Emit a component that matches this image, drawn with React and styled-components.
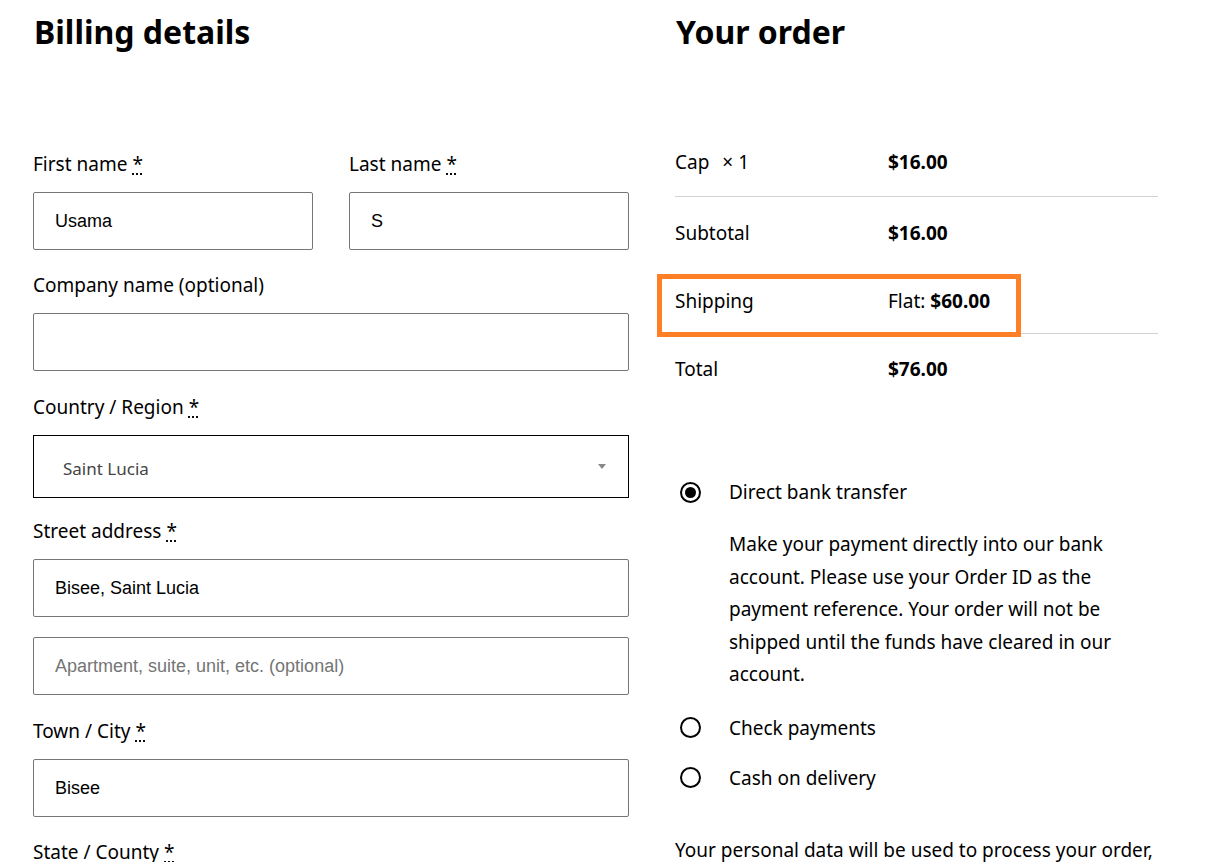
import React from "react";
import styled, { createGlobalStyle } from "styled-components";

const GlobalStyle = createGlobalStyle`
  html, body {
    margin: 0;
    padding: 0;
    background: #fff;
  }
  body {
    font-family: "Noto Sans", "Open Sans", sans-serif;
    color: #000;
    overflow: hidden;
  }
`;

const Page = styled.div`
  display: grid;
  grid-template-columns: 596px 483px;
  column-gap: 46px;
  padding-left: 33px;
  height: 862px;
  overflow: hidden;
`;

const Heading = styled.h2`
  margin: 12px 0 0 1px;
  font-size: 32px;
  line-height: 40px;
  font-weight: 700;
`;

const Form = styled.div`
  margin-top: 98px;
  display: flex;
  flex-direction: column;
`;

const Row = styled.div`
  display: grid;
  grid-template-columns: 280px 280px;
  column-gap: 36px;
  margin-bottom: 21px;
`;

const Field = styled.div`
  display: flex;
  flex-direction: column;
  gap: 14px;
  margin-bottom: ${(p) => p.$mb ?? 21}px;
`;

const Label = styled.label`
  font-size: 19px;
  line-height: 28px;
`;

const Req = styled.abbr`
  text-decoration: underline dotted;
  text-underline-offset: 3px;
  margin-left: 5px;
`;

const Input = styled.div`
  box-sizing: border-box;
  height: 58px;
  border: 1px solid #767676;
  border-radius: 2px;
  padding: 1px 21px 0;
  display: flex;
  align-items: center;
  font-family: "Liberation Sans", Arial, sans-serif;
  font-size: 18px;
  color: ${(p) => (p.$placeholder ? "#757575" : "#000")};
`;

const Select = styled.div`
  box-sizing: border-box;
  height: 63px;
  border: 1px solid #000;
  padding: 4px 22px 0 29px;
  display: flex;
  align-items: center;
  justify-content: space-between;
  font-size: 17px;
  color: #444;
`;

const Caret = styled.span`
  width: 0;
  height: 0;
  margin-top: -4px;
  border-left: 4px solid transparent;
  border-right: 4px solid transparent;
  border-top: 5px solid #888;
`;

const Right = styled.div`
  display: flex;
  flex-direction: column;
`;

const Table = styled.div`
  margin-top: 76px;
  display: flex;
  flex-direction: column;
`;

const OrderRow = styled.div`
  position: relative;
  display: grid;
  grid-template-columns: 213px 1fr;
  align-items: center;
  height: ${(p) => p.$h}px;
  font-size: 19px;
  border-bottom: ${(p) => (p.$line ? "1px solid #d2d2d2" : "none")};
  box-sizing: border-box;
`;

const Qty = styled.span`
  margin-left: 13px;
`;

const Amount = styled.span`
  font-weight: 700;
`;

const Highlight = styled.div`
  position: absolute;
  left: -18px;
  top: 5px;
  width: 364px;
  height: 63px;
  border: 5px solid #ff7f27;
  box-sizing: border-box;
  pointer-events: none;
`;

const Methods = styled.ul`
  list-style: none;
  margin: 74px 0 0;
  padding: 0;
  display: flex;
  flex-direction: column;
`;

const Method = styled.li`
  display: flex;
  flex-direction: column;
  margin-bottom: ${(p) => (p.$gap ? "22px" : "0")};
`;

const MethodHead = styled.div`
  display: flex;
  align-items: center;
  gap: 28px;
  height: 28px;
  font-size: 19px;
  padding-left: 5px;
`;

const Radio = styled.span`
  box-sizing: border-box;
  width: 21px;
  height: 21px;
  border-radius: 50%;
  border: 2px solid #000;
  display: flex;
  align-items: center;
  justify-content: center;
  flex-shrink: 0;
  &::after {
    content: "";
    display: ${(p) => (p.$checked ? "block" : "none")};
    width: 11px;
    height: 11px;
    border-radius: 50%;
    background: #000;
  }
`;

const Description = styled.p`
  margin: 22px 0 23px 54px;
  font-size: 19px;
  line-height: 32.5px;
`;

const Privacy = styled.p`
  margin: 44px 0 0;
  font-size: 19px;
  line-height: 28px;
  white-space: nowrap;
`;

const Required = () => <Req title="required">*</Req>;

export default function App() {
  return (
    <>
      <GlobalStyle />
      <Page>
        <div>
          <Heading>Billing details</Heading>
          <Form>
            <Row>
              <Field $mb={0}>
                <Label>First name<Required /></Label>
                <Input>Usama</Input>
              </Field>
              <Field $mb={0}>
                <Label>Last name<Required /></Label>
                <Input>S</Input>
              </Field>
            </Row>
            <Field $mb={22}>
              <Label>Company name (optional)</Label>
              <Input />
            </Field>
            <Field $mb={19}>
              <Label>Country / Region<Required /></Label>
              <Select>
                <span>Saint Lucia</span>
                <Caret />
              </Select>
            </Field>
            <Field $mb={20}>
              <Label>Street address<Required /></Label>
              <Input>Bisee, Saint Lucia</Input>
            </Field>
            <Field $mb={22}>
              <Input $placeholder>Apartment, suite, unit, etc. (optional)</Input>
            </Field>
            <Field>
              <Label>Town / City<Required /></Label>
              <Input>Bisee</Input>
            </Field>
            <Field>
              <Label>State / County<Required /></Label>
            </Field>
          </Form>
        </div>
        <Right>
          <Heading>Your order</Heading>
          <Table>
            <OrderRow $h={69} $line>
              <span>
                Cap<Qty>× 1</Qty>
              </span>
              <Amount>$16.00</Amount>
            </OrderRow>
            <OrderRow $h={72}>
              <span>Subtotal</span>
              <Amount>$16.00</Amount>
            </OrderRow>
            <OrderRow $h={65} $line>
              <span>Shipping</span>
              <span>
                Flat: <Amount>$60.00</Amount>
              </span>
              <Highlight />
            </OrderRow>
            <OrderRow $h={70}>
              <span>Total</span>
              <Amount>$76.00</Amount>
            </OrderRow>
          </Table>
          <Methods>
            <Method>
              <MethodHead>
                <Radio $checked />
                Direct bank transfer
              </MethodHead>
              <Description>
                Make your payment directly into our bank account. Please use
                your Order ID as the payment reference. Your order will not be
                shipped until the funds have cleared in our account.
              </Description>
            </Method>
            <Method $gap>
              <MethodHead>
                <Radio />
                Check payments
              </MethodHead>
            </Method>
            <Method>
              <MethodHead>
                <Radio />
                Cash on delivery
              </MethodHead>
            </Method>
          </Methods>
          <Privacy>Your personal data will be used to process your order,</Privacy>
        </Right>
      </Page>
    </>
  );
}
